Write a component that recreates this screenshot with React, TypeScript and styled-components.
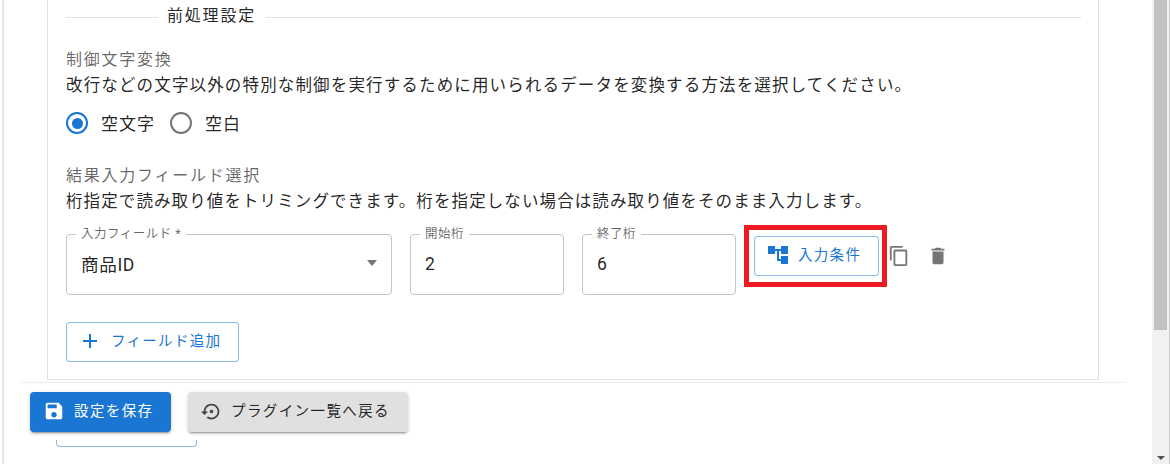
import React from 'react';
import styled, { createGlobalStyle } from 'styled-components';

const GlobalStyle = createGlobalStyle`
  html, body {
    margin: 0;
    padding: 0;
    height: 100%;
    overflow: hidden;
    background: #fff;
  }
  body {
    font-family: Roboto, "Noto Sans CJK JP", sans-serif;
    color: rgba(0, 0, 0, 0.87);
  }
`;

const Page = styled.div`
  display: flex;
  width: 1170px;
  height: 464px;
  overflow: hidden;
`;

const Content = styled.div`
  flex: 1;
  display: flex;
  flex-direction: column;
  min-width: 0;
  border-left: 2px solid #e6e6e6;
  margin-left: 2px;
`;

const Panel = styled.div`
  margin-left: 43px;
  width: 1052px;
  height: 380px;
  flex: none;
  box-sizing: border-box;
  border: 1px solid #e0e0e0;
  border-top: none;
  padding: 5px 17px 0 18px;
`;

const SectionDivider = styled.div`
  display: flex;
  align-items: center;
  height: 24px;
  gap: 10px;

  &::before,
  &::after {
    content: '';
    height: 1px;
    background: #e0e0e0;
  }
  &::before {
    width: 92px;
    margin-right: -1px;
  }
  &::after {
    flex: 1;
  }
`;

const DividerText = styled.span`
  font-size: 16px;
  letter-spacing: 1.8px;
  line-height: 20px;
  margin-bottom: 2px;
`;

const FieldTitle = styled.div<{ $top: number }>`
  font-size: 16px;
  letter-spacing: 1.75px;
  line-height: 26px;
  color: rgba(0, 0, 0, 0.6);
  margin-top: ${(p) => p.$top}px;
  white-space: nowrap;
`;

const Description = styled.div<{ $spacing: number }>`
  font-size: 16.5px;
  letter-spacing: ${(p) => p.$spacing}px;
  line-height: 26px;
  white-space: nowrap;
`;

const RadioRow = styled.div`
  display: flex;
  align-items: center;
  height: 26px;
  margin-top: 11px;
`;

const RadioItem = styled.label`
  display: flex;
  align-items: center;
  gap: 13px;
  margin-right: 15px;
  font-size: 17px;
  letter-spacing: 1px;
`;

const RadioText = styled.span`
  margin-bottom: 2px;
`;

const RadioCircle = styled.span<{ $on?: boolean }>`
  width: 22px;
  height: 22px;
  box-sizing: border-box;
  border-radius: 50%;
  border: 2px solid ${(p) => (p.$on ? '#1976d2' : '#757575')};
  display: flex;
  align-items: center;
  justify-content: center;

  &::after {
    content: '';
    display: ${(p) => (p.$on ? 'block' : 'none')};
    width: 11px;
    height: 11px;
    border-radius: 50%;
    background: #1976d2;
  }
`;

const FieldRow = styled.div`
  display: flex;
  align-items: flex-start;
  margin-top: 19px;
`;

const Outlined = styled.div<{ $width: number; $gap: number }>`
  position: relative;
  box-sizing: border-box;
  width: ${(p) => p.$width}px;
  height: 61px;
  margin-right: ${(p) => p.$gap}px;
  border: 1px solid #c4c4c4;
  border-radius: 4px;
  padding: 0 14px 2px;
  display: flex;
  align-items: center;
  justify-content: space-between;
  font-size: 17.6px;
  letter-spacing: 0.6px;
`;

const FloatingLabel = styled.span`
  position: absolute;
  top: -8px;
  left: 9px;
  padding: 0 5px;
  background: #fff;
  font-size: 12.5px;
  line-height: 14px;
  letter-spacing: 0.5px;
  color: rgba(0, 0, 0, 0.6);
  white-space: nowrap;
`;

const Caret = styled.span`
  width: 0;
  height: 0;
  margin-right: 0;
  margin-bottom: 2px;
  border-left: 5.5px solid transparent;
  border-right: 5.5px solid transparent;
  border-top: 6px solid #757575;
`;

const Highlight = styled.div`
  box-sizing: border-box;
  width: 143px;
  height: 62px;
  margin-top: -9px;
  margin-left: -1px;
  border: 5px solid #ed1c24;
  padding: 6px 3px 6px 5px;
  flex: none;
`;

const OutlineButton = styled.button<{ $width: number; $height: number; $gap: number }>`
  box-sizing: border-box;
  display: flex;
  align-items: center;
  gap: ${(p) => p.$gap}px;
  width: ${(p) => p.$width}px;
  height: ${(p) => p.$height}px;
  background: #fff;
  border: 1px solid rgba(25, 118, 210, 0.5);
  border-radius: 4px;
  color: #1976d2;
  font-family: inherit;
  font-size: 14.5px;
  letter-spacing: 1.3px;
  padding: 0 0 2px 11px;
`;

const ButtonLabel = styled.span`
  margin-bottom: 3px;
`;

const IconAction = styled.button<{ $left: number }>`
  background: none;
  border: none;
  padding: 0;
  width: 22px;
  height: 22px;
  margin-left: ${(p) => p.$left}px;
  margin-top: 11px;
  color: #757575;
  display: flex;
`;

const AddRow = styled.div`
  margin-top: 27px;
`;

const Footer = styled.div`
  margin-left: 17px;
  margin-right: 26px;
  height: 59px;
  flex: none;
  box-sizing: border-box;
  margin-top: 2px;
  border-top: 1px solid #eeeeee;
  padding: 9px 0 0 9px;
  display: flex;
  gap: 17px;
  align-items: flex-start;
  background: #fff;
`;

const SolidButton = styled.button<{ $primary?: boolean; $width: number }>`
  box-sizing: border-box;
  display: flex;
  align-items: center;
  gap: 9px;
  width: ${(p) => p.$width}px;
  height: 40px;
  border: none;
  border-radius: 4px;
  padding: 0 0 2px 13px;
  font-family: inherit;
  font-size: 14.5px;
  letter-spacing: 1.4px;
  background: ${(p) => (p.$primary ? '#1976d2' : '#e0e0e0')};
  color: ${(p) => (p.$primary ? '#fff' : 'rgba(0, 0, 0, 0.87)')};
  box-shadow: 0 3px 1px -2px rgba(0, 0, 0, 0.2), 0 2px 2px 0 rgba(0, 0, 0, 0.14),
    0 1px 5px 0 rgba(0, 0, 0, 0.12);
`;

const HiddenButtonEdge = styled.div`
  flex: none;
  box-sizing: border-box;
  width: 141px;
  height: 7px;
  margin-left: 52px;
  margin-top: -1px;
  border: 1px solid rgba(25, 118, 210, 0.5);
  border-top: none;
  border-radius: 0 0 4px 4px;
`;

const Scrollbar = styled.div`
  flex: none;
  width: 18px;
  height: 464px;
  box-sizing: border-box;
  background: #f1f1f1;
  border-right: 1px solid #c8c8c8;
  padding: 0 2px 0 2px;
  display: flex;
  flex-direction: column;
  justify-content: space-between;
  align-items: center;
`;

const ScrollThumb = styled.div`
  width: 13px;
  height: 330px;
  background: #c1c1c1;
`;

const ScrollArrow = styled.div`
  width: 0;
  height: 0;
  margin-bottom: 4px;
  border-left: 4px solid transparent;
  border-right: 4px solid transparent;
  border-top: 4px solid #505050;
`;

const Icon: React.FC<{ d: string; size: number; color?: string }> = ({ d, size, color }) => (
  <svg width={size} height={size} viewBox="0 0 24 24" fill={color || 'currentColor'} style={{ flex: 'none' }}>
    <path d={d} />
  </svg>
);

const TREE = 'M22 11V3h-7v3H9V3H2v8h7V8h2v10h4v3h7v-8h-7v3h-2V8h2v3z';
const COPY = 'M16 1H4c-1.1 0-2 .9-2 2v14h2V3h12V1zm3 4H8c-1.1 0-2 .9-2 2v14c0 1.1.9 2 2 2h11c1.1 0 2-.9 2-2V7c0-1.1-.9-2-2-2zm0 16H8V7h11v14z';
const TRASH = 'M6 19c0 1.1.9 2 2 2h8c1.1 0 2-.9 2-2V7H6v12zM19 4h-3.5l-1-1h-5l-1 1H5v2h14V4z';
const PLUS = 'M19 13h-6v6h-2v-6H5v-2h6V5h2v6h6v2z';
const SAVE = 'M17 3H5c-1.11 0-2 .9-2 2v14c0 1.1.89 2 2 2h14c1.1 0 2-.9 2-2V7l-4-4zm-5 16c-1.66 0-3-1.34-3-3s1.34-3 3-3 3 1.34 3 3-1.34 3-3 3zm3-10H5V5h10v4z';
const RESTORE = 'M14 12c0-1.1-.9-2-2-2s-2 .9-2 2 .9 2 2 2 2-.9 2-2zm-2-9c-4.97 0-9 4.03-9 9H0l4 4 4-4H5c0-3.87 3.13-7 7-7s7 3.13 7 7-3.13 7-7 7c-1.51 0-2.91-.49-4.06-1.3l-1.42 1.44C8.04 20.3 9.94 21 12 21c4.97 0 9-4.03 9-9s-4.03-9-9-9z';

const App: React.FC = () => {
  return (
    <Page>
      <GlobalStyle />
      <Content>
        <Panel>
          <SectionDivider><DividerText>前処理設定</DividerText></SectionDivider>
          <FieldTitle $top={18}>制御文字変換</FieldTitle>
          <Description $spacing={1.15}>改行などの文字以外の特別な制御を実行するために用いられるデータを変換する方法を選択してください。</Description>
          <RadioRow>
            <RadioItem><RadioCircle $on /><RadioText>空文字</RadioText></RadioItem>
            <RadioItem><RadioCircle /><RadioText>空白</RadioText></RadioItem>
          </RadioRow>
          <FieldTitle $top={27}>結果入力フィールド選択</FieldTitle>
          <Description $spacing={1.1}>桁指定で読み取り値をトリミングできます。桁を指定しない場合は読み取り値をそのまま入力します。</Description>
          <FieldRow>
            <Outlined $width={326} $gap={18}>
              <FloatingLabel>入力フィールド *</FloatingLabel>
              商品ID
              <Caret />
            </Outlined>
            <Outlined $width={154} $gap={18}>
              <FloatingLabel>開始桁</FloatingLabel>
              2
            </Outlined>
            <Outlined $width={154} $gap={9}>
              <FloatingLabel>終了桁</FloatingLabel>
              6
            </Outlined>
            <Highlight>
              <OutlineButton $width={125} $height={40} $gap={8}>
                <Icon d={TREE} size={24} color="#1976d2" />
                <ButtonLabel>入力条件</ButtonLabel>
              </OutlineButton>
            </Highlight>
            <IconAction $left={1}><Icon d={COPY} size={22} /></IconAction>
            <IconAction $left={17}><Icon d={TRASH} size={22} /></IconAction>
          </FieldRow>
          <AddRow>
            <OutlineButton $width={173} $height={40} $gap={9}>
              <Icon d={PLUS} size={24} color="#1976d2" />
              <ButtonLabel>フィールド追加</ButtonLabel>
            </OutlineButton>
          </AddRow>
        </Panel>
        <Footer>
          <SolidButton $primary $width={141}>
            <Icon d={SAVE} size={22} />
            <ButtonLabel>設定を保存</ButtonLabel>
          </SolidButton>
          <SolidButton $width={220}>
            <Icon d={RESTORE} size={21} color="#424242" />
            <ButtonLabel>プラグイン一覧へ戻る</ButtonLabel>
          </SolidButton>
        </Footer>
        <HiddenButtonEdge />
      </Content>
      <Scrollbar>
        <ScrollThumb />
        <ScrollArrow />
      </Scrollbar>
    </Page>
  );
};

export default App;
